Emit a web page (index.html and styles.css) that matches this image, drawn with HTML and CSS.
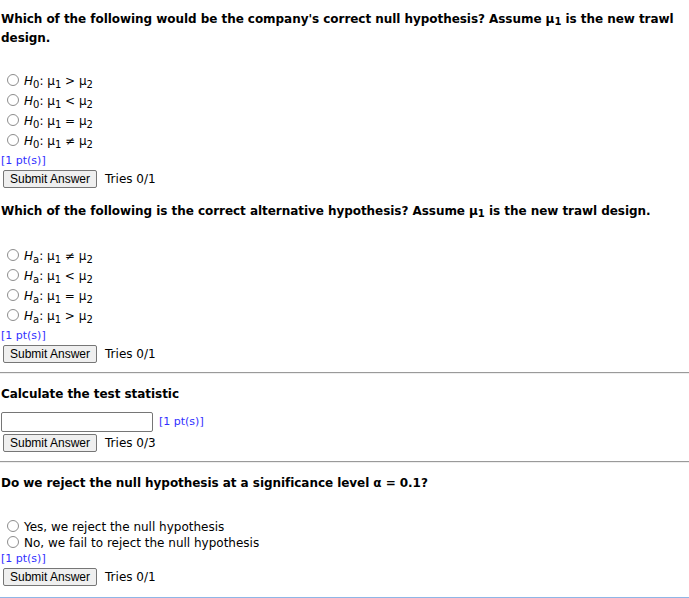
FILE: index.html
```html
<!DOCTYPE html>
<html lang="en">
<head>
<meta charset="utf-8">
<title>Hypothesis test</title>
<link rel="stylesheet" href="styles.css">
</head>
<body>
<div class="page">
  <section class="q q-first">
    <p class="qtext">Which of the following would be the company's correct null hypothesis? Assume μ<sub>1</sub> is the new trawl design.</p>
    <div class="opts opts-math">
      <label class="opt"><input type="radio" name="q1"><span class="math"><i>H</i><sub>0</sub>: μ<sub>1</sub> &gt; μ<sub>2</sub></span></label>
      <label class="opt"><input type="radio" name="q1"><span class="math"><i>H</i><sub>0</sub>: μ<sub>1</sub> &lt; μ<sub>2</sub></span></label>
      <label class="opt"><input type="radio" name="q1"><span class="math"><i>H</i><sub>0</sub>: μ<sub>1</sub> = μ<sub>2</sub></span></label>
      <label class="opt"><input type="radio" name="q1"><span class="math"><i>H</i><sub>0</sub>: μ<sub>1</sub> ≠ μ<sub>2</sub></span></label>
    </div>
    <div class="pts">[1 pt(s)]</div>
    <div class="submit-row"><button type="button" class="submit">Submit Answer</button><span class="tries">Tries 0/1</span></div>
  </section>

  <section class="q">
    <p class="qtext">Which of the following is the correct alternative hypothesis? Assume μ<sub>1</sub> is the new trawl design.</p>
    <div class="opts opts-math">
      <label class="opt"><input type="radio" name="q2"><span class="math"><i>H</i><sub>a</sub>: μ<sub>1</sub> ≠ μ<sub>2</sub></span></label>
      <label class="opt"><input type="radio" name="q2"><span class="math"><i>H</i><sub>a</sub>: μ<sub>1</sub> &lt; μ<sub>2</sub></span></label>
      <label class="opt"><input type="radio" name="q2"><span class="math"><i>H</i><sub>a</sub>: μ<sub>1</sub> = μ<sub>2</sub></span></label>
      <label class="opt"><input type="radio" name="q2"><span class="math"><i>H</i><sub>a</sub>: μ<sub>1</sub> &gt; μ<sub>2</sub></span></label>
    </div>
    <div class="pts">[1 pt(s)]</div>
    <div class="submit-row"><button type="button" class="submit">Submit Answer</button><span class="tries">Tries 0/1</span></div>
  </section>

  <hr class="rule">

  <section class="q">
    <p class="qtext">Calculate the test statistic</p>
    <div class="input-row"><input type="text" class="answer"><span class="pts">[1 pt(s)]</span></div>
    <div class="submit-row"><button type="button" class="submit">Submit Answer</button><span class="tries">Tries 0/3</span></div>
  </section>

  <hr class="rule">

  <section class="q">
    <p class="qtext">Do we reject the null hypothesis at a significance level α = 0.1?</p>
    <div class="opts">
      <label class="opt"><input type="radio" name="q4"><span>Yes, we reject the null hypothesis</span></label>
      <label class="opt"><input type="radio" name="q4"><span>No, we fail to reject the null hypothesis</span></label>
    </div>
    <div class="pts">[1 pt(s)]</div>
    <div class="submit-row"><button type="button" class="submit">Submit Answer</button><span class="tries">Tries 0/1</span></div>
  </section>

  <div class="bottom-line"></div>
</div>
</body>
</html>
```

FILE: styles.css
```css
html, body {
  margin: 0;
  padding: 0;
  background: #ffffff;
}

.page {
  display: flex;
  flex-direction: column;
  padding: 0 1px;
  font-family: "DejaVu Sans", Verdana, sans-serif;
  font-size: 12px;
  line-height: 16px;
  color: #000000;
}

.qtext {
  margin: 12px 0 0;
  font-weight: bold;
  font-size: 12px;
  line-height: 16px;
  letter-spacing: -0.05px;
}

.q-first .qtext {
  margin-top: 11px;
}

.qtext sub {
  font-size: 10px;
  vertical-align: -2px;
  letter-spacing: 0;
}

.opts {
  margin-top: 28px;
}

.opts-math {
  margin-top: 26px;
}

.q-first .opts-math {
  margin-top: 27px;
}

.opt {
  display: block;
  line-height: 16px;
}

.opt input[type="radio"] {
  -webkit-appearance: none;
  appearance: none;
  box-sizing: border-box;
  width: 12px;
  height: 12px;
  margin: 0 5px 0 6px;
  border: 1px solid #8d8d8d;
  border-radius: 50%;
  background: #ffffff;
  vertical-align: -1px;
}

.math sub {
  font-size: 10px;
  vertical-align: -3px;
}

.math i {
  font-style: italic;
}

.pts {
  display: block;
  font-size: 11px;
  line-height: 16px;
  color: #3030ff;
}

.submit-row {
  display: flex;
  align-items: center;
  margin-bottom: 2px;
}

.submit {
  margin: 1px 0 1px 2px;
  padding: 1px 6px;
  height: 18px;
  box-sizing: border-box;
  border: 1px solid #767676;
  border-radius: 2px;
  background: #efefef;
  color: #000000;
  font-family: "Liberation Sans", Arial, sans-serif;
  font-size: 12px;
  line-height: 14px;
}

.tries {
  margin-left: 8px;
  font-size: 12px;
  line-height: 16px;
}

.input-row {
  display: flex;
  align-items: center;
  margin-top: 10px;
  margin-bottom: 1px;
}

.answer {
  width: 152px;
  height: 20px;
  box-sizing: border-box;
  margin: 0;
  border: 1px solid #767676;
  border-radius: 2px;
  padding: 1px 2px;
  font-family: "DejaVu Sans", Verdana, sans-serif;
  font-size: 12px;
}

.input-row .pts {
  margin-left: 6px;
}

.rule {
  margin: 6px -1px 0;
  height: 0;
  border: 0;
  border-top: 1px solid #9a9a9a;
  border-bottom: 1px solid #eeeeee;
}

.bottom-line {
  margin: 8px -1px 0;
  border-top: 1px solid #8fb6e6;
}
```
